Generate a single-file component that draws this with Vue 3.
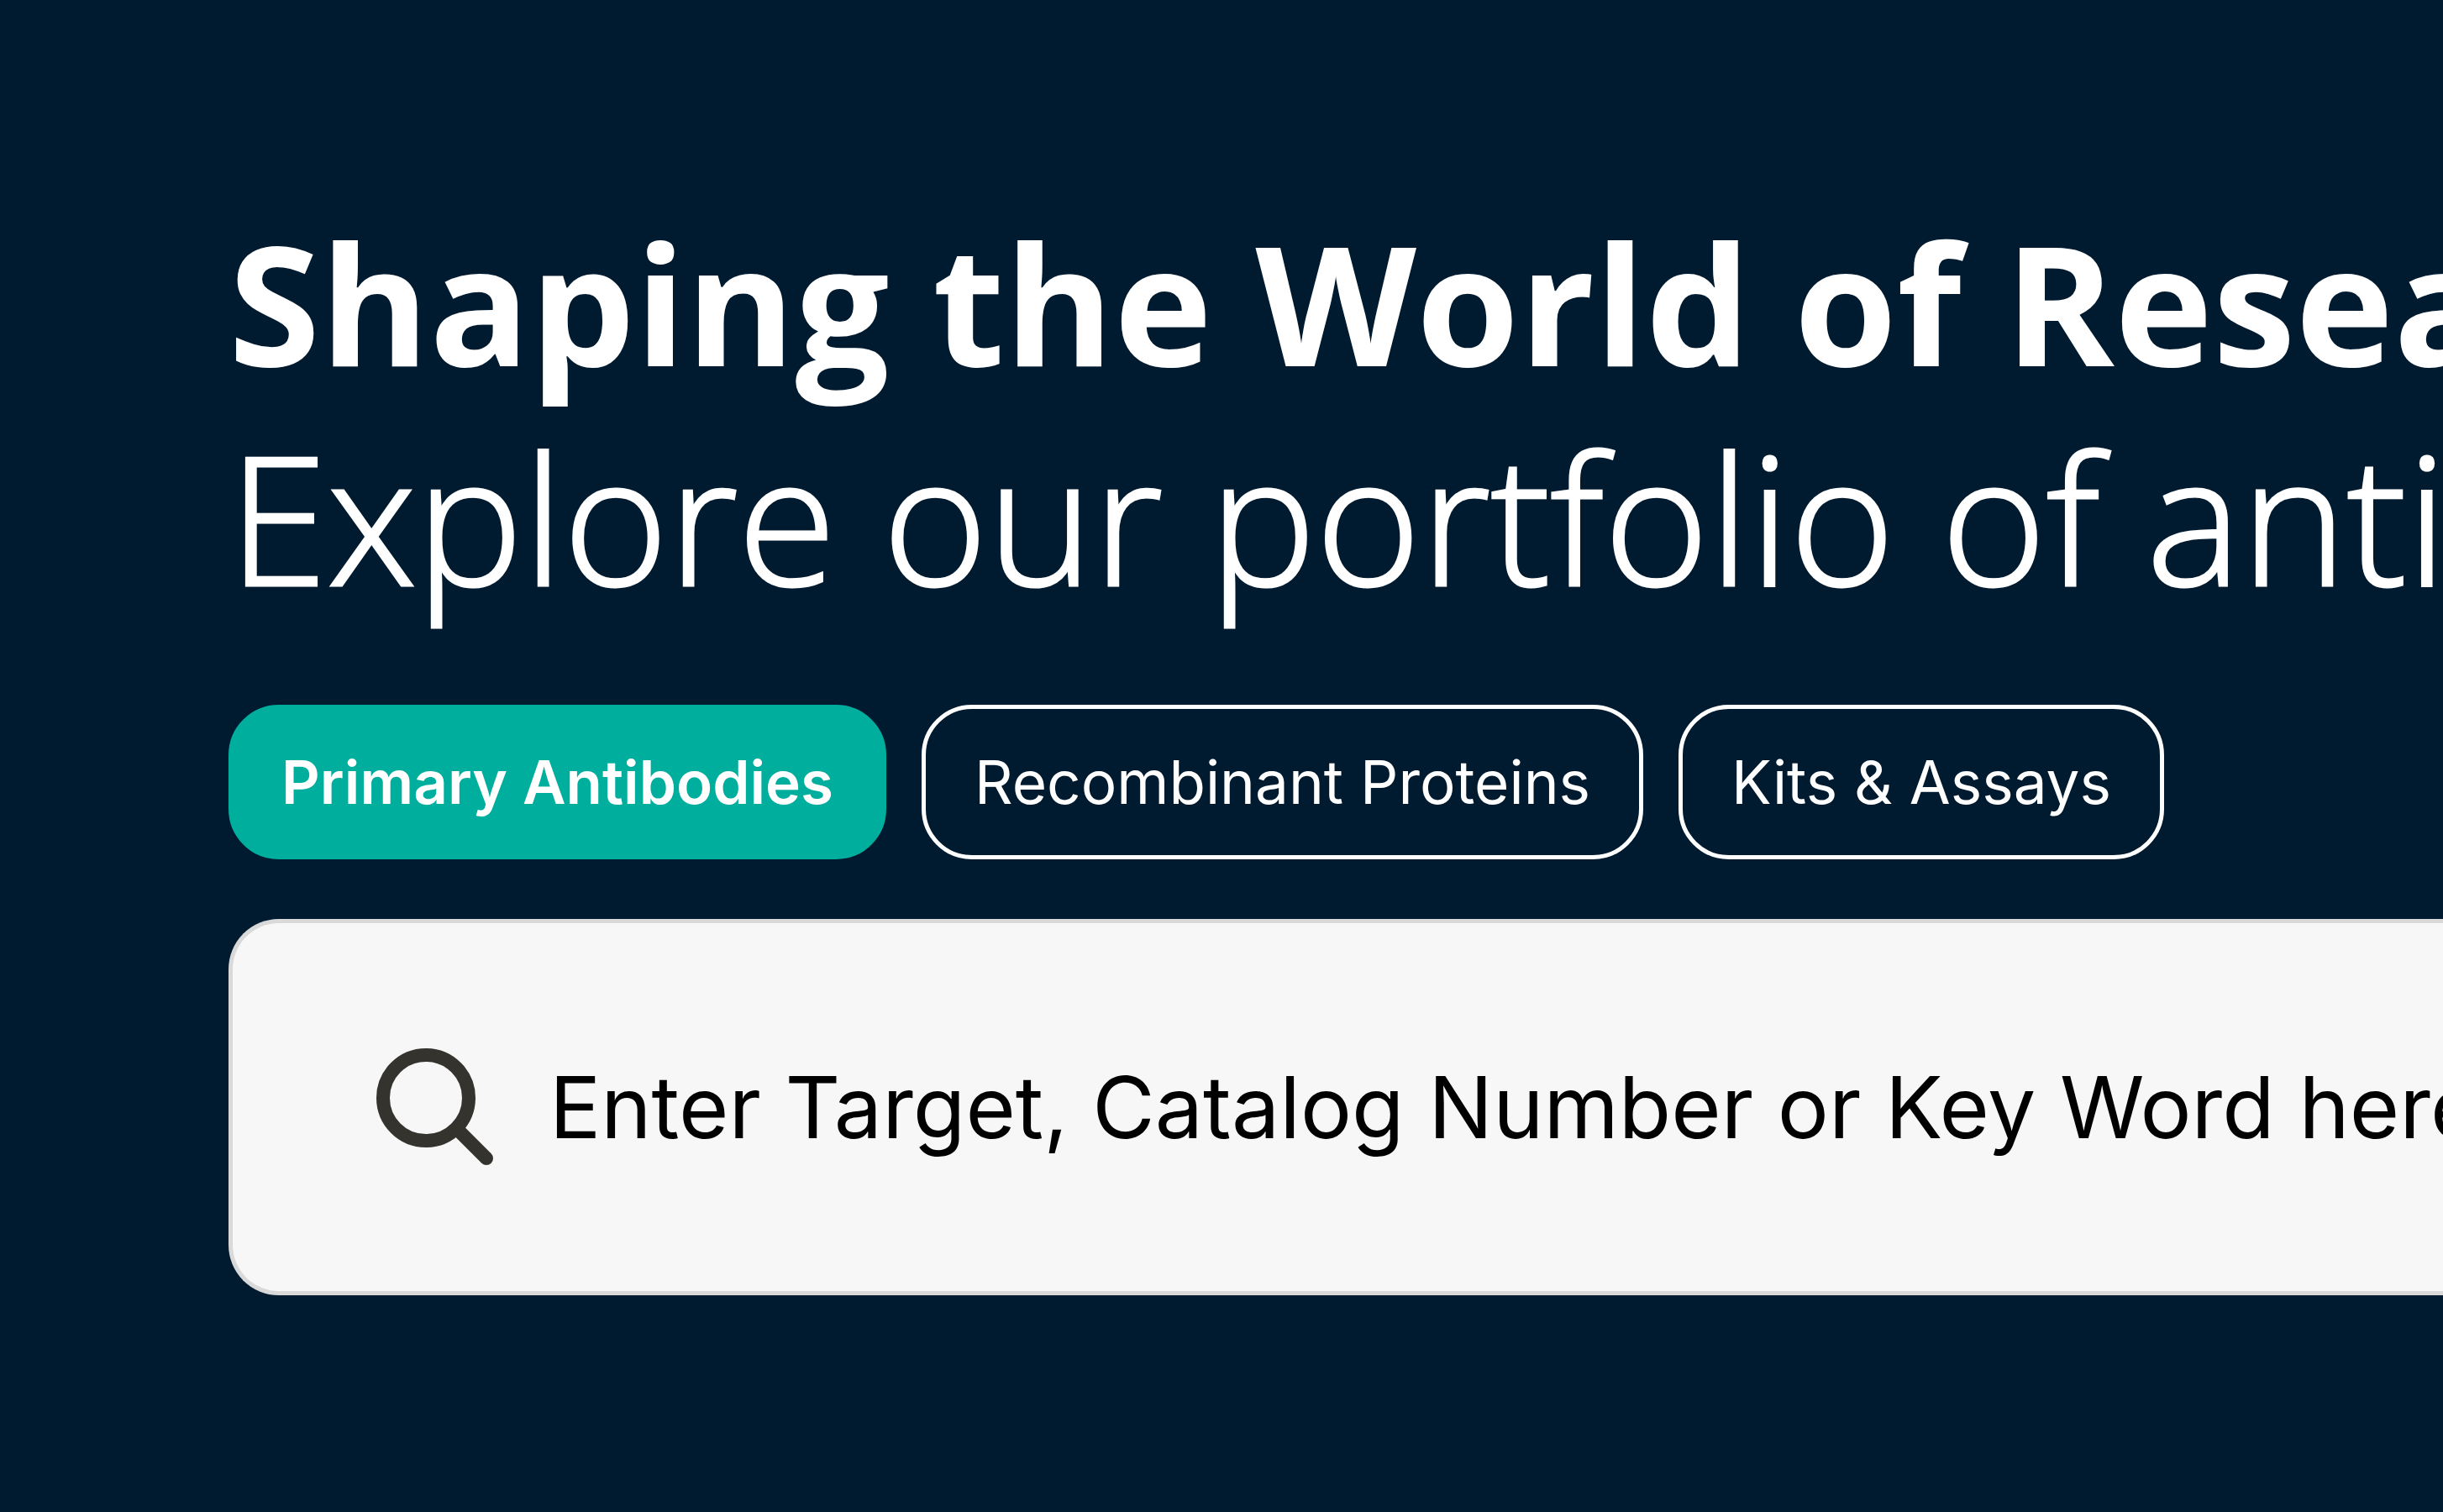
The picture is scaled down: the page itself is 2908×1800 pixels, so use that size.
<script setup>
import { ref } from 'vue'

const categories = ['Primary Antibodies', 'Recombinant Proteins', 'Kits & Assays']
const active = ref(categories[0])
const query = ref('')
</script>

<template>
  <main class="hero">
    <h1 class="headline">Shaping the World of Research</h1>
    <p class="subline">Explore our portfolio of antibodies</p>

    <div class="tabs">
      <button
        v-for="category in categories"
        :key="category"
        type="button"
        class="tab"
        :class="{ active: category === active }"
        :aria-pressed="category === active"
        @click="active = category"
      >{{ category }}</button>
    </div>

    <form class="search" role="search" @submit.prevent>
      <label class="icon" for="catalog-search" aria-label="Search the catalog">
        <svg viewBox="0 0 140 140" fill="none" stroke="#34332e" aria-hidden="true">
          <circle cx="59" cy="59" r="51" stroke-width="16" />
          <path d="M100 100 131 131" stroke-width="16" stroke-linecap="round" />
        </svg>
      </label>
      <input
        id="catalog-search"
        v-model="query"
        type="text"
        placeholder="Enter Target, Catalog Number or Key Word here"
      />
    </form>
  </main>
</template>

<style>
body {
  margin: 0;
  background: #001b2f;
}
</style>

<style scoped>
.hero {
  box-sizing: border-box;
  min-height: 100vh;
  padding: 232px 0 232px 272px;
  overflow: hidden;
  background: #001b2f;
  color: #fff;
  font-family: Inter, sans-serif;
}

.headline,
.subline {
  margin: 0;
  font-family: "Open Sans", sans-serif;
  line-height: 255px;
  white-space: nowrap;
}

.headline {
  font-size: 198px;
  font-weight: 700;
}

.subline {
  font-size: 213px;
  font-weight: 300;
  -webkit-text-stroke: 3px #fff;
}

.tabs {
  display: flex;
  gap: 42px;
  margin-top: 97px;
}

.tab {
  box-sizing: border-box;
  height: 184px;
  padding: 0 58px;
  border: 5px solid #fff;
  border-radius: 60px;
  background: transparent;
  color: #fff;
  font: 400 71px Inter, sans-serif;
  white-space: nowrap;
}

.tab.active {
  border-color: #00ae9e;
  background: #00ae9e;
  font-weight: 600;
}

.search {
  display: flex;
  align-items: center;
  box-sizing: border-box;
  height: 448px;
  margin-top: 71px;
  padding-left: 171px;
  border: 5px solid #d9d9d9;
  border-right: 0;
  border-radius: 60px 0 0 60px;
  background: #f7f7f7;
}

.icon {
  flex: none;
  width: 140px;
  height: 140px;
}

.icon svg {
  display: block;
  width: 100%;
  height: 100%;
}

input {
  flex: 1;
  min-width: 0;
  height: 140px;
  margin-left: 66px;
  padding: 0;
  border: 0;
  outline: none;
  background: transparent;
  color: #000;
  font: 400 102px Inter, sans-serif;
}

input::placeholder {
  color: #000;
  opacity: 1;
}
</style>
